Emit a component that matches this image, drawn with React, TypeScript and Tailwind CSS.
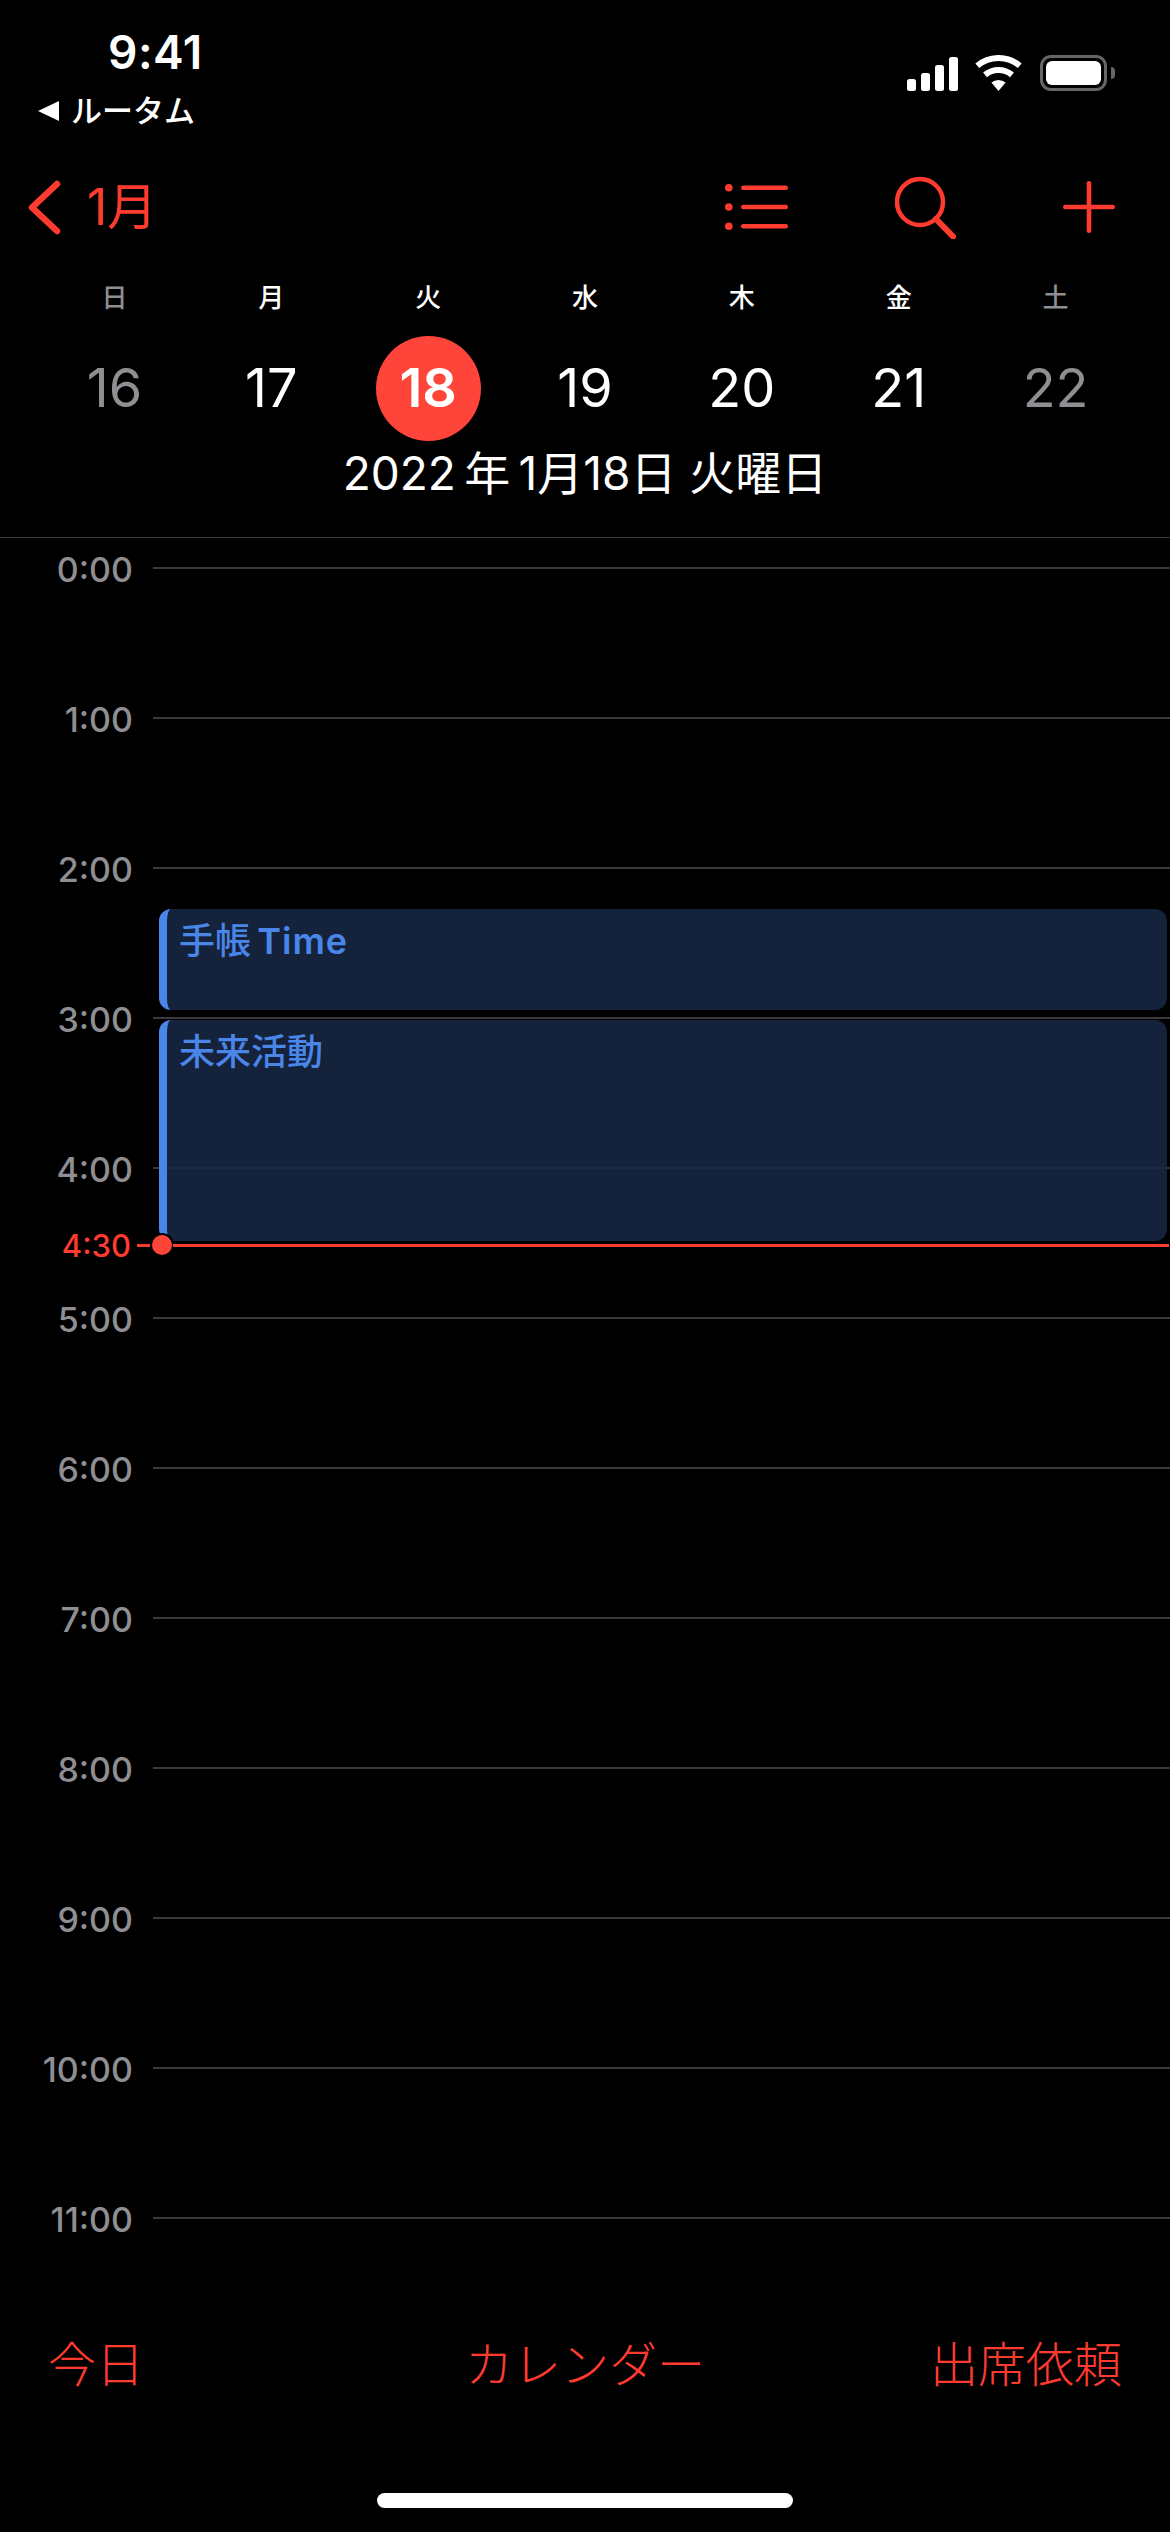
const hours = ["0:00","1:00","2:00","3:00","4:00","5:00","6:00","7:00","8:00","9:00","10:00","11:00"];
const week = [
  { w: "日", d: "16", muted: true },
  { w: "月", d: "17" },
  { w: "火", d: "18", today: true },
  { w: "水", d: "19" },
  { w: "木", d: "20" },
  { w: "金", d: "21" },
  { w: "土", d: "22", muted: true },
];

function StatusIcons() {
  return (
    <div className="flex items-start pt-[55px] pr-[55px]">
      <svg width="51" height="36" viewBox="0 0 51 36" className="mr-[17px]" fill="#fff">
        <rect x="0" y="24" width="9" height="12" rx="2.5" />
        <rect x="14" y="18" width="9" height="18" rx="2.5" />
        <rect x="28" y="10" width="9" height="26" rx="2.5" />
        <rect x="42" y="2" width="9" height="34" rx="2.5" />
      </svg>
      <svg width="47" height="36" viewBox="0 0 47 36" className="mr-[18px]" fill="none" stroke="#fff">
        <path d="M2.3 10.7A33 33 0 0 1 44.7 10.7" strokeWidth="6" />
        <path d="M10 19.9A21 21 0 0 1 37 19.9" strokeWidth="6" />
        <path d="M23.5 36L16.4 27.6A11 11 0 0 1 30.6 27.6Z" fill="#fff" stroke="none" />
      </svg>
      <div className="flex items-center h-[36px]">
        <div className="w-[67px] h-[36px] border-[3px] border-[#666666] rounded-[11px] p-[3px]">
          <div className="w-full h-full bg-white rounded-[6px]" />
        </div>
        <div className="w-[4px] h-[12px] ml-[4px] bg-[#666666] rounded-r-full" />
      </div>
    </div>
  );
}

function Header() {
  return (
    <div className="h-[537px]">
      <div className="h-[177px] flex justify-between">
        <div className="pl-[38px] pt-[30px]">
          <div className="ml-[70px] h-[44px] leading-[44px] text-[46px] font-semibold text-white tracking-[0.5px]">9:41</div>
          <div className="mt-[22px] h-[30px] flex items-center text-white text-[31px] font-medium leading-[30px]">
            <svg width="21" height="20" viewBox="0 0 21 20" className="mr-[12px]" fill="#fff">
              <path d="M0 10L21 0V20Z" />
            </svg>
            <span>ルータム</span>
          </div>
        </div>
        <StatusIcons />
      </div>
      <div className="h-[60px] flex items-center justify-between pl-[28px] pr-[55px]">
        <div className="flex items-center">
          <svg width="33" height="55" viewBox="0 0 33 55" fill="none" stroke="#ff3b30" strokeWidth="6.5" strokeLinecap="round" strokeLinejoin="round">
            <path d="M29 4L4 27.5L29 51" />
          </svg>
          <span className="ml-[26px] text-[50px] leading-[50px] text-[#ff3b30]">1月</span>
        </div>
        <div className="flex items-center">
          <svg width="63" height="46" viewBox="0 0 63 46" fill="#ff3b30" stroke="none">
            <circle cx="3.8" cy="3.8" r="3.8" />
            <circle cx="3.8" cy="23" r="3.8" />
            <circle cx="3.8" cy="42.2" r="3.8" />
            <rect x="16" y="1.6" width="47" height="4.5" rx="2.25" />
            <rect x="16" y="20.8" width="47" height="4.5" rx="2.25" />
            <rect x="16" y="40" width="47" height="4.5" rx="2.25" />
          </svg>
          <svg width="61" height="63" viewBox="0 0 61 63" className="ml-[107px]" fill="none" stroke="#ff3b30" strokeLinecap="round">
            <circle cx="25" cy="26" r="23" strokeWidth="4.5" />
            <path d="M41 43L58 60.5" strokeWidth="6" />
          </svg>
          <svg width="52" height="52" viewBox="0 0 52 52" className="ml-[107px]" fill="#ff3b30">
            <rect x="0" y="23.7" width="52" height="4.6" rx="2.3" />
            <rect x="23.7" y="0" width="4.6" height="52" rx="2.3" />
          </svg>
        </div>
      </div>
      <div className="px-[36px] pt-[46px] grid grid-cols-7">
        {week.map((c) => (
          <div key={c.w} className="flex flex-col items-center">
            <div className={`h-[30px] leading-[30px] text-[26px] font-medium ${c.muted ? "text-[#8e8e93]" : "text-white"}`}>{c.w}</div>
            <div className={`mt-[23px] w-[105px] h-[105px] pb-[3px] rounded-full flex items-center justify-center text-[54px] ${c.today ? "bg-[#ff453a] text-white font-semibold" : c.muted ? "text-[#8e8e93]" : "text-white"}`}>{c.d}</div>
          </div>
        ))}
      </div>
      <div className="mt-[7px] h-[50px] leading-[50px] text-center text-white text-[46px]">2022{"\u2009"}年{"\u2009"}1月18日 火曜日</div>
    </div>
  );
}

function Timeline() {
  return (
    <div className="relative h-[1797px] pt-[10px]">
      {hours.map((h) => (
        <div key={h} className="h-[150px]">
          <div className="h-[40px] flex items-center">
            <div className="w-[133px] pt-[4px] text-right text-[34px] leading-[40px] font-medium text-[#8e8e93]">{h}</div>
            <div className="ml-[20px] flex-1 h-[2px] bg-[#3a3a3c]" />
          </div>
        </div>
      ))}
      <div className="absolute left-[159px] right-[3px] top-[371px] h-[101px] rounded-[12px] border-l-[8px] border-[#4a86e8] bg-[#182846]/85 pl-[12px] pt-[10px] text-[36px] leading-[44px] font-medium text-[#4a86e8]">手帳{"\u2009"}<span className="font-semibold tracking-[1px]">Time</span></div>
      <div className="absolute left-[159px] right-[3px] top-[482px] h-[221px] rounded-[12px] border-l-[8px] border-[#4a86e8] bg-[#182846]/85 pl-[12px] pt-[10px] text-[36px] leading-[44px] font-medium text-[#4a86e8]">未来活動</div>
      <div className="absolute left-0 right-[1px] top-[687px] h-[40px] flex items-center">
        <div className="w-[131px] pt-[2px] text-right text-[31px] leading-[40px] font-medium text-[#ff3b30]">4:30</div>
        <div className="ml-[6px] w-[13px] h-[3px] bg-[#ff3b30]" />
        <div className="w-[24px] h-[24px] -mr-[1px] rounded-full bg-[#ff453a] border-[2px] border-black" />
        <div className="flex-1 h-[3px] bg-[#ff3b30]" />
      </div>
    </div>
  );
}

export default function App() {
  return (
    <div className="w-[1170px] h-[2532px] bg-black overflow-hidden font-['Inter','Noto_Sans_CJK_JP',sans-serif]">
      <Header />
      <div className="h-[1px] bg-[#3a3a3c]" />
      <Timeline />
      <div className="h-[60px] grid grid-cols-3 items-center px-[48px] text-[48px] leading-[60px] font-light text-[#ff3b30]">
        <div>今日</div>
        <div className="text-center whitespace-nowrap">カレンダー</div>
        <div className="text-right whitespace-nowrap">出席依頼</div>
      </div>
      <div className="mt-[98px] mx-auto w-[416px] h-[15px] rounded-full bg-white" />
    </div>
  );
}
